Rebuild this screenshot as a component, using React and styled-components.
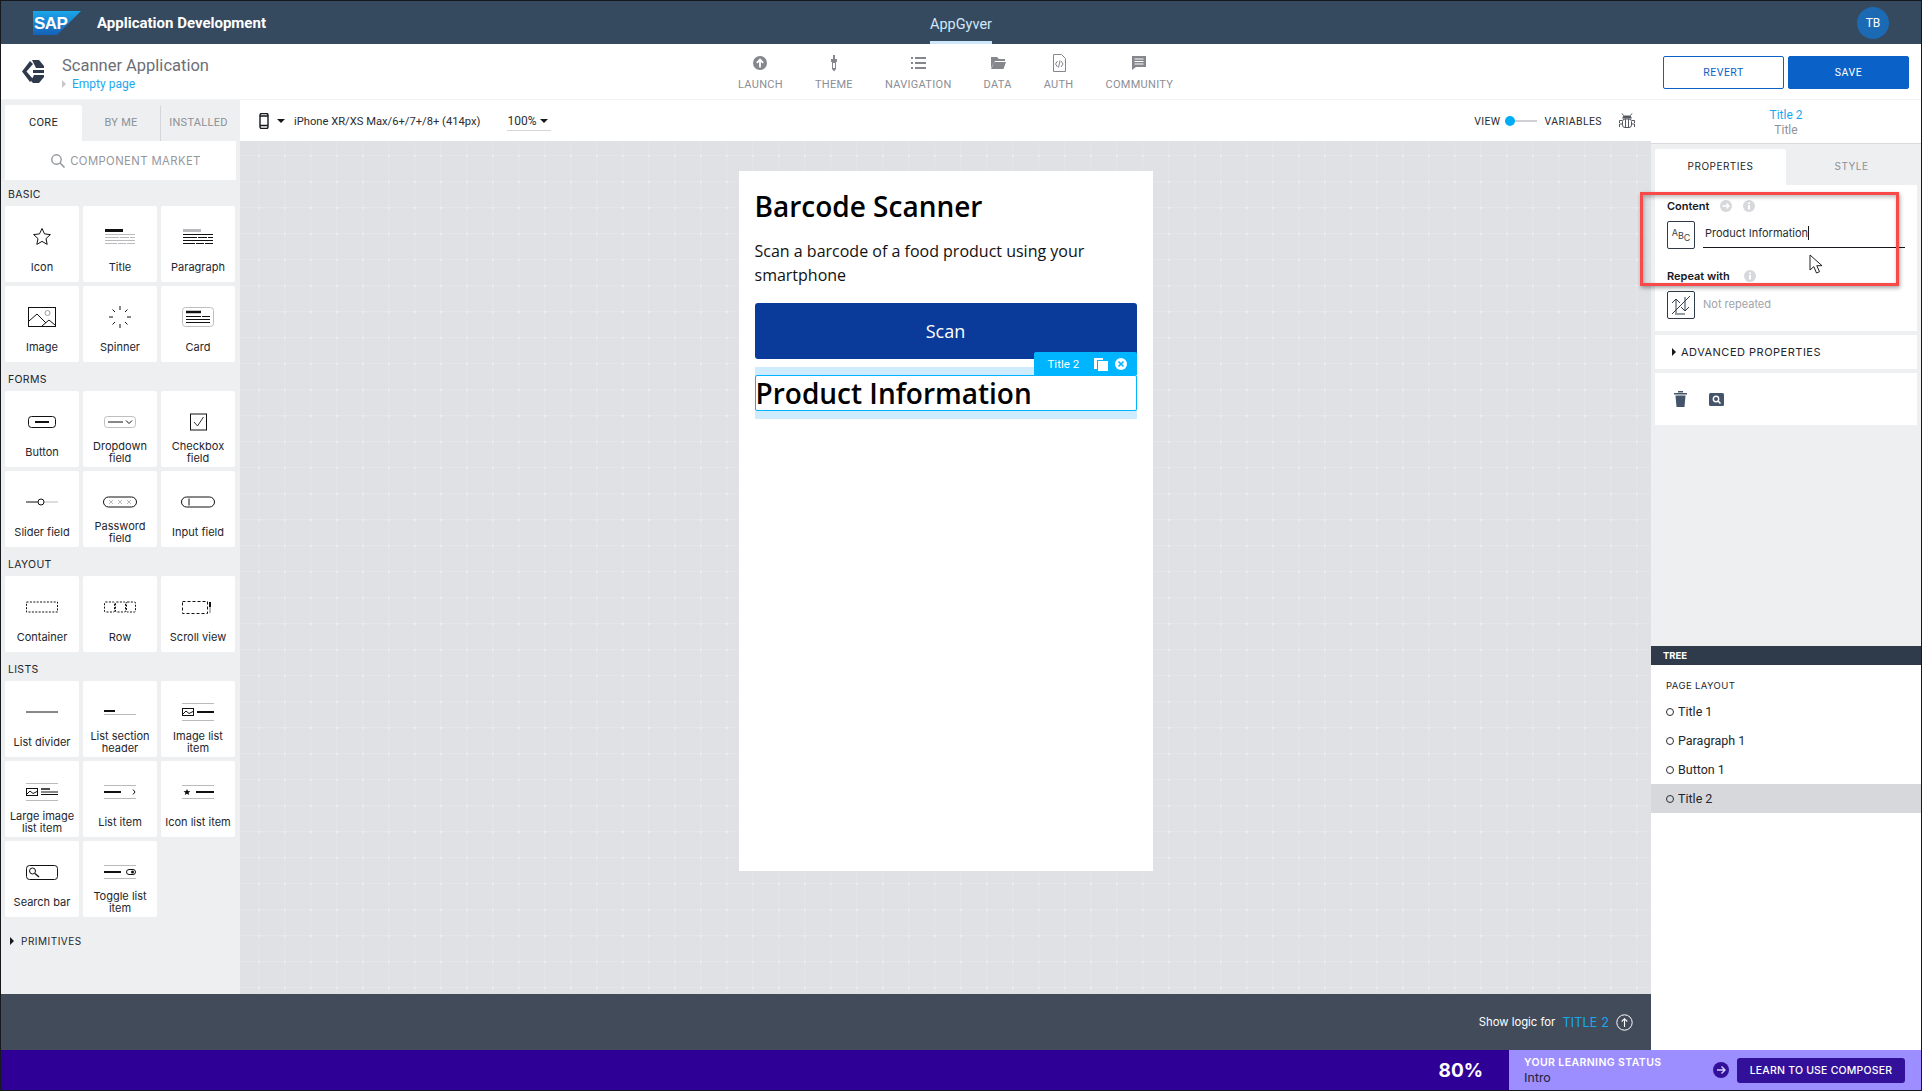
import React from "react";
import styled, { createGlobalStyle } from "styled-components";

const GlobalStyle = createGlobalStyle`
  html, body { margin: 0; padding: 0; background: #fff; }
  * { box-sizing: border-box; }
  body { font-family: Inter, "Liberation Sans", sans-serif; color: #16191f; }
`;

const Frame = styled.div`
  position: relative;
  width: 1922px;
  height: 1091px;
  border: 1px solid #15181c;
  display: flex;
  flex-direction: column;
  overflow: hidden;
`;

/* top bar */
const Header = styled.header`
  height: 43px;
  flex: none;
  background: #364a5f;
  display: grid;
  grid-template-columns: 1fr auto 1fr;
  align-items: center;
  padding: 0 32px;
`;
const Brand = styled.div`
  display: flex;
  align-items: center;
  gap: 16px;
`;
const BrandName = styled.span`
  font-family: Roboto, sans-serif;
  font-weight: 700;
  font-size: 15px;
  color: #fff;
`;
const AppTab = styled.div`
  font-family: Roboto, sans-serif;
  font-size: 14.5px;
  color: #cfe6fb;
  height: 39px;
  width: 62px;
  margin-top: 4px;
  padding-top: 2px;
  display: flex;
  align-items: center;
  justify-content: center;
  border-bottom: 3px solid #cfe6fb;
`;
const Avatar = styled.div`
  justify-self: end;
  width: 32px;
  height: 32px;
  border-radius: 50%;
  background: #1c6ab3;
  color: #fff;
  font-family: Roboto, sans-serif;
  font-size: 12px;
  display: flex;
  align-items: center;
  justify-content: center;
`;

/* second bar */
const Toolbar = styled.div`
  height: 56px;
  flex: none;
  background: #fff;
  border-bottom: 1px solid #f1f2f3;
  display: flex;
  align-items: center;
`;
const Project = styled.div`
  width: 737px;
  flex: none;
  display: flex;
  align-items: center;
  padding-left: 20px;
  gap: 17px;
`;
const ProjectText = styled.div`
  display: flex;
  flex-direction: column;
  padding-top: 3px;
`;
const ProjectName = styled.div`
  font-family: Roboto, sans-serif;
  font-size: 16.5px;
  line-height: 20px;
  color: #6c6f77;
`;
const PageLink = styled.div`
  display: flex;
  align-items: center;
  gap: 6px;
  font-family: Roboto, sans-serif;
  font-size: 12px;
  line-height: 14px;
  margin-top: 1px;
  color: #1ba8f0;
  &::before {
    content: "";
    border-left: 4px solid #c6c8cc;
    border-top: 4px solid transparent;
    border-bottom: 4px solid transparent;
  }
`;
const Nav = styled.nav`
  display: flex;
  gap: 32px;
  padding-top: 2px;
`;
const NavItem = styled.div`
  display: flex;
  flex-direction: column;
  align-items: center;
  gap: 6px;
  font-family: Roboto, sans-serif;
  font-size: 11px;
  letter-spacing: 0.3px;
  color: #8b8e95;
  svg { display: block; }
`;
const Actions = styled.div`
  margin-left: auto;
  margin-top: 1px;
  display: flex;
  gap: 4px;
  padding-right: 12px;
`;
const ActionButton = styled.button`
  width: 121px;
  height: 33px;
  border-radius: 2px;
  border: 1.5px solid #0a62c9;
  background: ${(p) => (p.$primary ? "#0a62c9" : "#fff")};
  color: ${(p) => (p.$primary ? "#fff" : "#0a62c9")};
  font-family: Roboto, sans-serif;
  font-size: 10.5px;
  font-weight: 400;
  letter-spacing: 0.5px;
`;

const Body = styled.div`
  flex: 1;
  min-height: 0;
  display: flex;
`;
const MainColumn = styled.div`
  flex: 1;
  min-width: 0;
  display: flex;
  flex-direction: column;
`;
const WorkArea = styled.div`
  flex: 1;
  min-height: 0;
  display: flex;
`;

/* component palette */
const Palette = styled.aside`
  width: 239px;
  flex: none;
  background: #eeeff1;
  padding: 5px 4px 0 4px;
`;
const PaletteTabs = styled.div`
  display: grid;
  grid-template-columns: 77px 78px 76px;
  height: 36px;
`;
const PaletteTab = styled.div`
  display: flex;
  align-items: center;
  justify-content: center;
  padding-bottom: 2px;
  font-family: Roboto, sans-serif;
  font-size: 11px;
  letter-spacing: 0.3px;
  color: ${(p) => (p.$active ? "#1c1f25" : "#8c8f96")};
  background: ${(p) => (p.$active ? "#fff" : "transparent")};
  border-left: ${(p) => (p.$divider ? "1px solid #d5d6da" : "0")};
  border-radius: 2px 2px 0 0;
`;
const Market = styled.div`
  height: 39px;
  background: #fff;
  display: flex;
  align-items: center;
  justify-content: center;
  gap: 4px;
  padding-left: 10px;
  font-size: 11.3px;
  letter-spacing: 0.4px;
  color: #94979d;
`;
const SectionLabel = styled.div`
  height: ${(p) => (p.$first ? "26px" : "29px")};
  padding-left: 3px;
  padding-top: ${(p) => (p.$first ? "9px" : "12px")};
  font-size: 10.5px;
  line-height: 12px;
  letter-spacing: 0.3px;
  color: #23262d;
`;
const TileGrid = styled.div`
  display: grid;
  grid-template-columns: repeat(3, 74px);
  grid-auto-rows: 76px;
  gap: 4px;
`;
const Tile = styled.div`
  background: #fff;
  border-radius: 2px;
  padding-top: 13px;
  display: flex;
  flex-direction: column;
  align-items: center;
  svg { display: block; }
`;
const TileLabel = styled.div`
  height: 28px;
  width: 100%;
  margin-top: -2px;
  padding: 0 3px;
  display: flex;
  align-items: center;
  justify-content: center;
  text-align: center;
  font-size: 11px;
  line-height: 12px;
  color: #23262d;
`;
const Disclosure = styled.div`
  display: flex;
  align-items: center;
  gap: ${(p) => p.$gap || 6}px;
  font-size: ${(p) => p.$size || 10}px;
  letter-spacing: 0.5px;
  color: #23262d;
  &::before {
    content: "";
    border-left: 4px solid #15181c;
    border-top: 4px solid transparent;
    border-bottom: 4px solid transparent;
  }
`;
const Primitives = styled(Disclosure)`
  height: 16px;
  margin-top: 16px;
  padding-left: 5px;
`;

/* centre */
const Center = styled.div`
  flex: 1;
  min-width: 0;
  display: flex;
  flex-direction: column;
`;
const DeviceBar = styled.div`
  height: 41px;
  flex: none;
  background: #fff;
  display: flex;
  align-items: center;
  padding: 1px 15px 0 19px;
  font-family: Roboto, sans-serif;
  font-size: 11.2px;
  color: #2a2d33;
`;
const Caret = styled.span`
  display: inline-block;
  border-top: 4px solid #15181c;
  border-left: 4px solid transparent;
  border-right: 4px solid transparent;
  margin: ${(p) => p.$margin || "0"};
`;
const Zoom = styled.div`
  margin-left: 27px;
  width: 44px;
  height: 19px;
  border-bottom: 1px solid #d5d6da;
  display: flex;
  align-items: center;
  gap: 4px;
  font-size: 12px;
`;
const ViewSwitch = styled.div`
  margin-left: auto;
  display: flex;
  align-items: center;
  font-size: 10.5px;
  letter-spacing: 0.4px;
`;
const SwitchTrack = styled.div`
  position: relative;
  width: 32px;
  height: 2px;
  background: #cfd0d4;
  margin: 0 8px 0 4px;
  &::before {
    content: "";
    position: absolute;
    left: 0;
    top: -4px;
    width: 10px;
    height: 10px;
    border-radius: 50%;
    background: #00adf5;
  }
`;
const BugWrap = styled.div`
  margin-left: 16px;
  display: flex;
`;
const Canvas = styled.div`
  flex: 1;
  min-height: 0;
  background-color: #e0e1e5;
  background-image:
    radial-gradient(circle at 0.5px 0.5px, rgba(255, 255, 255, 0.35) 1.5px, transparent 2px),
    linear-gradient(to right, rgba(255, 255, 255, 0.12) 1px, transparent 1px),
    linear-gradient(to bottom, rgba(255, 255, 255, 0.12) 1px, transparent 1px);
  background-size: 26px 26px;
  background-position: 18px 14px;
  display: flex;
  justify-content: center;
  padding-top: 30px;
`;
const Phone = styled.div`
  width: 414px;
  height: 700px;
  background: #fff;
  padding: 16px;
  font-family: "Open Sans", sans-serif;
  color: #000;
`;
const PhoneTitle = styled.div`
  font-size: 28px;
  font-weight: 600;
  line-height: 38px;
  color: #000;
`;
const PhoneText = styled.div`
  margin-top: 14px;
  font-size: 16px;
  line-height: 24px;
  color: #111;
`;
const ScanButton = styled.div`
  margin-top: 16px;
  height: 56px;
  background: #0a3b9a;
  border-radius: 3px;
  color: #fff;
  font-size: 18px;
  display: flex;
  align-items: center;
  justify-content: center;
`;
const SelectedBand = styled.div`
  position: relative;
  margin-top: 8px;
  padding: 8px 0;
  background: #cfecff;
`;
const SelectedTitle = styled.div`
  height: 36px;
  background: #fff;
  border: 1px solid #00b5ff;
  border-radius: 2px;
  display: flex;
  align-items: center;
  font-size: 28px;
  font-weight: 600;
  line-height: 34px;
`;
const SelectionTag = styled.div`
  position: absolute;
  right: 0;
  top: -15px;
  width: 103px;
  height: 23px;
  background: #00b5ff;
  border-radius: 2px 2px 0 0;
  color: #fff;
  font-size: 11.5px;
  display: flex;
  align-items: center;
  gap: 15px;
  padding-left: 14px;
  font-family: Roboto, sans-serif;
  svg { display: block; }
`;

const LogicBar = styled.div`
  height: 56px;
  flex: none;
  background: #424b5a;
  display: flex;
  align-items: center;
  justify-content: flex-end;
  padding-right: 18px;
  font-size: 11.3px;
  color: #fff;
`;
const LogicTarget = styled.span`
  color: #19a9ef;
  font-size: 12.5px;
  margin: 0 7px 0 7px;
  letter-spacing: 0.2px;
`;

/* right panel */
const Inspector = styled.aside`
  width: 270px;
  flex: none;
  display: flex;
  flex-direction: column;
  background: #eeeff1;
`;
const InspectorHead = styled.div`
  height: 44px;
  flex: none;
  background: #fff;
  border-bottom: 1px solid #d9dadd;
  text-align: center;
  padding-top: 8px;
  font-family: Roboto, sans-serif;
  font-size: 12px;
  line-height: 15px;
`;
const HeadTitle = styled.div`
  color: #1ba8f0;
`;
const HeadType = styled.div`
  color: #8f9298;
`;
const InspectorBody = styled.div`
  flex: 1;
  min-height: 0;
  padding: 5px 4px 0 4px;
`;
const InspectorTabs = styled.div`
  display: grid;
  grid-template-columns: 131px 131px;
  height: 36px;
`;
const InspectorTab = styled(PaletteTab)`
  font-family: Inter, sans-serif;
  font-size: 10px;
  letter-spacing: 0.5px;
`;
const Card = styled.div`
  background: #fff;
  margin-bottom: 4px;
  height: ${(p) => p.$height}px;
`;
const PropsCard = styled(Card)`
  padding: 13px 12px 0 12px;
`;
const FieldLabel = styled.div`
  display: flex;
  align-items: center;
  gap: ${(p) => p.$gap}px;
  height: 16px;
  margin-top: ${(p) => p.$top || 0}px;
  font-size: 11px;
  font-weight: 600;
  color: #15181c;
`;
const FieldRow = styled.div`
  display: flex;
  gap: 8px;
  margin-top: 7px;
`;
const TypeBox = styled.div`
  width: 28px;
  height: 28px;
  flex: none;
  border: 1px solid #2f3a4b;
  border-radius: 2px;
  display: flex;
  align-items: center;
  justify-content: center;
  color: #3a3f49;
  svg { display: block; }
`;
const AbcLetter = styled.span`
  position: relative;
  top: ${(p) => p.$shift}px;
  font-size: 9px;
`;
const FieldInput = styled.div`
  flex: 1;
  height: 27px;
  border-bottom: 1px solid #15181c;
  padding: 0 0 2px 2px;
  display: flex;
  align-items: center;
  font-size: 11px;
  color: #2a2d33;
  &::after {
    content: "";
    width: 1px;
    height: 14px;
    background: #15181c;
  }
`;
const NotRepeated = styled.div`
  display: flex;
  align-items: center;
  padding-bottom: 2px;
  font-size: 11px;
  color: #a0a3a9;
`;
const AdvancedCard = styled(Card)`
  display: flex;
  align-items: center;
  padding-left: 17px;
`;
const ToolsCard = styled(Card)`
  display: flex;
  align-items: center;
  padding: 0 0 0 19px;
  gap: 22px;
  svg { display: block; }
`;
const Tree = styled.div`
  height: 404px;
  flex: none;
  background: #fff;
`;
const TreeHead = styled.div`
  height: 19px;
  background: #2f3a4b;
  color: #fff;
  font-size: 9.5px;
  font-weight: 700;
  display: flex;
  align-items: center;
  padding-left: 12px;
`;
const TreeLabel = styled.div`
  padding: 15px 0 0 15px;
  height: 32px;
  font-size: 9.5px;
  line-height: 12px;
  letter-spacing: 0.4px;
  color: #23262d;
`;
const TreeItem = styled.div`
  height: 29px;
  display: flex;
  align-items: center;
  gap: 4px;
  padding-left: 15px;
  font-family: Roboto, sans-serif;
  font-size: 12.5px;
  color: #23262d;
  background: ${(p) => (p.$active ? "#d7d8dc" : "transparent")};
  &::before {
    content: "";
    width: 6px;
    height: 6px;
    border-radius: 50%;
    border: 1px solid #2a2d33;
  }
`;

/* learning bar */
const Footer = styled.footer`
  height: 40px;
  flex: none;
  display: flex;
`;
const Score = styled.div`
  width: 1508px;
  background: #2f0096;
  color: #fff;
  font-weight: 700;
  font-size: 19px;
  display: flex;
  align-items: center;
  justify-content: flex-end;
  padding-right: 26px;
`;
const Learning = styled.div`
  flex: 1;
  background: #9d8eff;
  display: flex;
  align-items: center;
  padding: 0 16px 0 15px;
`;
const LearningText = styled.div`
  display: flex;
  flex-direction: column;
  gap: 1px;
  padding-top: 1px;
`;
const LearningTitle = styled.div`
  font-size: 10.5px;
  line-height: 13px;
  font-weight: 600;
  letter-spacing: 0.4px;
  color: #fff;
`;
const LearningLevel = styled.div`
  font-family: Roboto, sans-serif;
  font-size: 13px;
  line-height: 15px;
  color: #26233f;
`;
const LearnButton = styled.div`
  margin-left: 8px;
  width: 168px;
  height: 25px;
  background: #33109a;
  border-radius: 3px;
  color: #fff;
  font-size: 10.5px;
  font-weight: 500;
  letter-spacing: 0.2px;
  display: flex;
  align-items: center;
  justify-content: center;
`;
const ArrowDot = styled.div`
  margin-left: auto;
  display: flex;
`;

/* overlays that belong to the screenshot annotation */
const Callout = styled.div`
  position: absolute;
  left: 1639px;
  top: 191px;
  width: 259px;
  height: 94px;
  border: 3px solid #f94a4a;
  box-shadow: 1px 2px 4px rgba(0, 0, 0, 0.35), inset 1px 2px 4px rgba(0, 0, 0, 0.28);
  pointer-events: none;
`;
const Pointer = styled.svg`
  position: absolute;
  left: 1808px;
  top: 253px;
`;

const line = (x1, y1, x2, y2, color = "#111", w = 1, extra = {}) => (
  <line x1={x1} y1={y1} x2={x2} y2={y2} stroke={color} strokeWidth={w} {...extra} />
);
const G = "#b9babd";
const dash = { strokeDasharray: "2 1.4" };

const icons = {
  star: <path d="M24 9.5l2.5 5.4 5.9.7-4.4 4 1.2 5.8-5.2-3-5.2 3 1.2-5.8-4.4-4 5.9-.7z" fill="none" stroke="#111" />,
  title: (
    <>
      {line(9, 11.5, 27, 11.5, "#111", 3)}
      {line(9, 15.5, 39, 15.5, G)}
      {line(9, 18.5, 39, 18.5, G, 1, { strokeDasharray: "14 1 9 1 5" })}
      {line(9, 21.5, 39, 21.5, G)}
      {line(9, 24.5, 39, 24.5, G, 1, { strokeDasharray: "12 1 8 1 8" })}
    </>
  ),
  paragraph: (
    <>
      {line(9, 11.5, 27, 11.5, G, 3)}
      {line(9, 15.5, 39, 15.5)}
      {line(9, 18.5, 39, 18.5, "#111", 1, { strokeDasharray: "14 1 9 1 5" })}
      {line(9, 21.5, 39, 21.5)}
      {line(9, 24.5, 39, 24.5, "#111", 1, { strokeDasharray: "12 1 8 1 8" })}
    </>
  ),
  image: (
    <>
      <rect x="10.5" y="8.5" width="27" height="19" fill="none" stroke="#111" />
      <path d="M11 22l8-7 9 9M24 27l7-6 6 5" fill="none" stroke="#111" />
      <circle cx="29.5" cy="14" r="2.5" fill="none" stroke="#999" />
    </>
  ),
  spinner: (
    <>
      {line(24, 7, 24, 11)}
      {line(24, 25, 24, 29)}
      {line(13, 18, 17, 18)}
      {line(31, 18, 35, 18)}
      {line(16.5, 10.5, 19, 13)}
      {line(29, 23, 31.5, 25.5)}
      {line(16.5, 25.5, 19, 23)}
      {line(29, 13, 31.5, 10.5)}
    </>
  ),
  card: (
    <>
      <rect x="8.5" y="8.5" width="31" height="19" rx="3" fill="none" stroke="#bdbec1" />
      {line(12, 13, 27, 13, "#111", 2.5)}
      {line(12, 17.5, 36, 17.5, "#111", 1, { strokeDasharray: "15 1 8" })}
      {line(12, 20.5, 36, 20.5)}
      {line(12, 23.5, 36, 23.5)}
    </>
  ),
  button: (
    <>
      <rect x="10.5" y="12.5" width="27" height="11" rx="3" fill="none" stroke="#111" />
      {line(17, 18, 31, 18, "#111", 2)}
    </>
  ),
  dropdown: (
    <>
      <rect x="8.5" y="12.5" width="31" height="11" rx="3" fill="none" stroke="#bdbec1" />
      {line(12, 18, 27, 18)}
      <path d="M30 16.5l3 3 3-3" fill="none" stroke="#111" />
    </>
  ),
  checkbox: (
    <>
      <rect x="16.5" y="10" width="16" height="16" fill="none" stroke="#111" />
      <path d="M20 18l3.5 4 6-9" fill="none" stroke="#333" />
    </>
  ),
  slider: (
    <>
      {line(8, 18, 20, 18)}
      {line(26, 18, 40, 18, G)}
      <circle cx="23" cy="18" r="3" fill="none" stroke="#111" />
    </>
  ),
  password: (
    <>
      <rect x="7.5" y="13" width="33" height="10" rx="5" fill="none" stroke="#111" />
      <path d="M13 16l4 4m0-4l-4 4M22 16l4 4m0-4l-4 4M31 16l4 4m0-4l-4 4" stroke={G} fill="none" />
    </>
  ),
  input: (
    <>
      <rect x="7.5" y="13" width="33" height="10" rx="5" fill="none" stroke="#111" />
      {line(15, 14.5, 15, 21.5)}
    </>
  ),
  container: <rect x="8.5" y="13" width="31" height="10" fill="none" stroke="#111" strokeDasharray="2 1.4" />,
  row: (
    <>
      <rect x="8.5" y="13" width="10" height="10" rx="1" fill="none" stroke="#111" {...dash} />
      <rect x="19.5" y="13" width="10" height="10" rx="1" fill="none" stroke="#111" {...dash} />
      <rect x="30.5" y="13" width="9" height="10" rx="1" fill="none" stroke="#111" {...dash} />
    </>
  ),
  scroll: (
    <>
      <rect x="8.5" y="12.5" width="25" height="12" fill="none" stroke="#111" strokeDasharray="3 2" />
      {line(36, 13, 36, 18, "#111", 2)}
      {line(36, 18, 36, 24, G, 2)}
    </>
  ),
  divider: line(8, 18, 40, 18),
  sectionHeader: (
    <>
      {line(8, 17, 19, 17, "#111", 2)}
      {line(8, 20.5, 40, 20.5, G)}
    </>
  ),
  imageItem: (
    <>
      {line(8, 9.5, 40, 9.5, G)}
      {line(8, 26.5, 40, 26.5, G)}
      <rect x="8.5" y="14.5" width="11" height="7" fill="none" stroke="#111" />
      <path d="M9 20l3-3 3 2.5 4-2" fill="none" stroke="#111" />
      {line(23, 18, 40, 18, "#111", 2)}
    </>
  ),
  largeImageItem: (
    <>
      {line(8, 9.5, 40, 9.5, G)}
      {line(8, 26.5, 40, 26.5, G)}
      <rect x="8.5" y="14.5" width="11" height="7" fill="none" stroke="#111" />
      <path d="M9 20l3-3 3 2.5 4-2" fill="none" stroke="#111" />
      {line(23, 15, 32, 15, "#111", 1.5)}
      {line(23, 18, 40, 18)}
      {line(23, 20.5, 40, 20.5)}
    </>
  ),
  listItem: (
    <>
      {line(8, 11.5, 40, 11.5, G)}
      {line(8, 24.5, 40, 24.5, G)}
      {line(8, 18, 25, 18, "#111", 2)}
      <path d="M37 15.5l2 2.5-2 2.5" fill="none" stroke="#111" />
    </>
  ),
  iconItem: (
    <>
      {line(8, 11.5, 40, 11.5, G)}
      {line(8, 24.5, 40, 24.5, G)}
      <path d="M13 15l1 2 2.4.2-1.8 1.5.6 2.3-2.2-1.2-2.2 1.2.6-2.3-1.8-1.5 2.4-.2z" fill="#111" />
      {line(22, 18, 40, 18, "#111", 2)}
    </>
  ),
  search: (
    <>
      <rect x="8.5" y="11.5" width="31" height="14" rx="3" fill="none" stroke="#111" />
      <circle cx="14.5" cy="17" r="3" fill="none" stroke="#111" />
      {line(17, 19.5, 21, 23, "#111", 1.3)}
    </>
  ),
  toggle: (
    <>
      {line(8, 11.5, 40, 11.5, G)}
      {line(8, 24.5, 40, 24.5, G)}
      {line(8, 18, 25, 18, "#111", 2)}
      <rect x="30.5" y="15.5" width="9" height="5" rx="2.5" fill="none" stroke="#111" />
      <circle cx="36.5" cy="18" r="1.5" fill="#111" />
    </>
  ),
};

const sections = [
  {
    name: "BASIC",
    items: [
      ["Icon", "star"],
      ["Title", "title"],
      ["Paragraph", "paragraph"],
      ["Image", "image"],
      ["Spinner", "spinner"],
      ["Card", "card"],
    ],
  },
  {
    name: "FORMS",
    items: [
      ["Button", "button"],
      ["Dropdown field", "dropdown"],
      ["Checkbox field", "checkbox"],
      ["Slider field", "slider"],
      ["Password field", "password"],
      ["Input field", "input"],
    ],
  },
  {
    name: "LAYOUT",
    items: [
      ["Container", "container"],
      ["Row", "row"],
      ["Scroll view", "scroll"],
    ],
  },
  {
    name: "LISTS",
    items: [
      ["List divider", "divider"],
      ["List section header", "sectionHeader"],
      ["Image list item", "imageItem"],
      ["Large image list item", "largeImageItem"],
      ["List item", "listItem"],
      ["Icon list item", "iconItem"],
      ["Search bar", "search"],
      ["Toggle list item", "toggle"],
    ],
  },
];

const navItems = [
  {
    label: "LAUNCH",
    icon: (
      <>
        <circle cx="9" cy="9" r="7" fill="#85878d" />
        <path d="M9 13.5V6M5.8 8.8L9 5.5l3.2 3.3" fill="none" stroke="#fff" strokeWidth="1.8" />
      </>
    ),
  },
  {
    label: "THEME",
    icon: (
      <>
        <path d="M8 1h2v4h2v3h-1v7l-2 2.5L7 15V8H6V5h2z" fill="#85878d" />
        <path d="M8 9h2v5H8z" fill="#fff" />
      </>
    ),
  },
  {
    label: "NAVIGATION",
    icon: (
      <path
        d="M2 3h2v2H2zM6 3h11v2H6zM2 8h2v2H2zM6 8h11v2H6zM2 13h2v2H2zM6 13h11v2H6z"
        fill="#85878d"
      />
    ),
  },
  {
    label: "DATA",
    icon: <path d="M2 3h6l2 2h6v2H6l-4 7zM5.5 8H17l-2.5 7H2z" fill="#85878d" />,
  },
  {
    label: "AUTH",
    icon: (
      <>
        <path d="M3.5 .5h8l4 4v13h-12z" fill="none" stroke="#85878d" />
        <path d="M7.5 7L5.5 10l2 3M11 7l2 3-2 3M10 6.5l-1.5 7" fill="none" stroke="#85878d" />
      </>
    ),
  },
  {
    label: "COMMUNITY",
    icon: (
      <>
        <path d="M2 2h14v11H6l-4 3z" fill="#85878d" />
        <path d="M4.5 5h9M4.5 7.5h9M4.5 10h9" stroke="#fff" />
      </>
    ),
  },
];

const SapLogo = () => (
  <svg width="48" height="24" viewBox="0 0 48 24">
    <defs>
      <linearGradient id="sapBlue" x1="0" y1="0" x2="0" y2="1">
        <stop offset="0" stopColor="#1aa6ea" />
        <stop offset="1" stopColor="#1561b8" />
      </linearGradient>
    </defs>
    <path d="M0 0h48L24 24H0z" fill="url(#sapBlue)" />
    <text x="1" y="17.5" fontFamily="Liberation Sans, sans-serif" fontWeight="700" fontSize="17" fill="#fff" letterSpacing="-0.6">
      SAP
    </text>
  </svg>
);

const ProjectLogo = () => (
  <svg width="24" height="25" viewBox="0 0 24 25">
    <g fill="#2f3a4b">
      <path d="M9 2L1 12.5 9 23l3-3-6.5-7.5L12 5z" />
      <path d="M11 1h7l5 6v2H15z" />
      <path d="M12 11h11v3H12z" />
      <path d="M13 16h10v2l-5 6h-6l-2-2z" />
    </g>
  </svg>
);

const InfoDot = () => (
  <svg width="12" height="12" viewBox="0 0 12 12">
    <circle cx="6" cy="6" r="6" fill="#d7d8db" />
    <path d="M5 5h2v4.5H5zM5 2.5h2V4H5z" fill="#fff" />
  </svg>
);

const ArrowHint = () => (
  <svg width="12" height="12" viewBox="0 0 12 12">
    <circle cx="6" cy="6" r="6" fill="#d7d8db" />
    <path d="M2.5 6h6.5M6.5 3.5L9 6 6.5 8.5" fill="none" stroke="#fff" strokeWidth="1.4" />
  </svg>
);

export default function App() {
  return (
    <>
      <GlobalStyle />
      <Frame>
        <Header>
          <Brand>
            <SapLogo />
            <BrandName>Application Development</BrandName>
          </Brand>
          <AppTab>AppGyver</AppTab>
          <Avatar>TB</Avatar>
        </Header>

        <Toolbar>
          <Project>
            <ProjectLogo />
            <ProjectText>
              <ProjectName>Scanner Application</ProjectName>
              <PageLink>Empty page</PageLink>
            </ProjectText>
          </Project>
          <Nav>
            {navItems.map((n) => (
              <NavItem key={n.label}>
                <svg width="18" height="18" viewBox="0 0 18 18">{n.icon}</svg>
                {n.label}
              </NavItem>
            ))}
          </Nav>
          <Actions>
            <ActionButton>REVERT</ActionButton>
            <ActionButton $primary>SAVE</ActionButton>
          </Actions>
        </Toolbar>

        <Body>
          <MainColumn>
            <WorkArea>
              <Palette>
                <PaletteTabs>
                  <PaletteTab $active>CORE</PaletteTab>
                  <PaletteTab>BY ME</PaletteTab>
                  <PaletteTab $divider>INSTALLED</PaletteTab>
                </PaletteTabs>
                <Market>
                  <svg width="16" height="16" viewBox="0 0 16 16">
                    <circle cx="6.5" cy="6.5" r="4.7" fill="none" stroke="#94979d" strokeWidth="1.4" />
                    <path d="M10 10l4.5 4.5" stroke="#94979d" strokeWidth="1.6" />
                  </svg>
                  COMPONENT MARKET
                </Market>
                {sections.map((s, i) => (
                  <div key={s.name}>
                    <SectionLabel $first={i === 0}>{s.name}</SectionLabel>
                    <TileGrid>
                      {s.items.map(([label, icon]) => (
                        <Tile key={label}>
                          <svg width="48" height="36" viewBox="0 0 48 36">{icons[icon]}</svg>
                          <TileLabel>{label}</TileLabel>
                        </Tile>
                      ))}
                    </TileGrid>
                  </div>
                ))}
                <Primitives $gap={7}>PRIMITIVES</Primitives>
              </Palette>

              <Center>
                <DeviceBar>
                  <svg width="10" height="16" viewBox="0 0 10 16">
                    <rect x="1" y=".5" width="8" height="15" rx="1.5" fill="#fff" stroke="#15181c" strokeWidth="1.4" />
                    <path d="M1 3h8M1 12.5h8" stroke="#15181c" strokeWidth="1.4" />
                  </svg>
                  <Caret $margin="0 9px 0 8px" />
                  iPhone XR/XS Max/6+/7+/8+ (414px)
                  <Zoom>
                    100%
                    <Caret />
                  </Zoom>
                  <ViewSwitch>
                    VIEW
                    <SwitchTrack />
                    VARIABLES
                    <BugWrap>
                      <svg width="18" height="18" viewBox="0 0 18 18">
                        <path d="M5.5 3.5h7l1.5 3H4z" fill="#55585f" />
                        <rect x="4.5" y="7" width="9" height="8.5" rx="2.5" fill="none" stroke="#55585f" />
                        <path
                          d="M7.5 7v8.5M10.5 7v8.5M5.5 3.5L4 1.5M12.5 3.5L14 1.5M4 8.5H1.5V11M14 8.5h2.5V11M4 12H1.5v3M14 12h2.5v3"
                          fill="none"
                          stroke="#55585f"
                        />
                      </svg>
                    </BugWrap>
                  </ViewSwitch>
                </DeviceBar>
                <Canvas>
                  <Phone>
                    <PhoneTitle>Barcode Scanner</PhoneTitle>
                    <PhoneText>Scan a barcode of a food product using your smartphone</PhoneText>
                    <ScanButton>Scan</ScanButton>
                    <SelectedBand>
                      <SelectionTag>
                        Title 2
                        <svg width="34" height="14" viewBox="0 0 34 14">
                          <path d="M0 1h9v2H3v9H0z" fill="#fff" />
                          <path d="M4 4h10v10H4z" fill="#fff" />
                          <circle cx="27" cy="7" r="6" fill="#fff" />
                          <path d="M24.5 4.5l5 5m0-5l-5 5" stroke="#00b5ff" strokeWidth="1.6" />
                        </svg>
                      </SelectionTag>
                      <SelectedTitle>Product Information</SelectedTitle>
                    </SelectedBand>
                  </Phone>
                </Canvas>
              </Center>
            </WorkArea>
            <LogicBar>
              Show logic for
              <LogicTarget>TITLE 2</LogicTarget>
              <svg width="17" height="17" viewBox="0 0 17 17">
                <circle cx="8.5" cy="8.5" r="7.7" fill="none" stroke="#fff" />
                <path d="M8.5 13V5M5.7 7.5l2.8-2.8 2.8 2.8" fill="none" stroke="#fff" strokeWidth="1.1" />
              </svg>
            </LogicBar>
          </MainColumn>

          <Inspector>
            <InspectorHead>
              <HeadTitle>Title 2</HeadTitle>
              <HeadType>Title</HeadType>
            </InspectorHead>
            <InspectorBody>
              <InspectorTabs>
                <InspectorTab $active>PROPERTIES</InspectorTab>
                <InspectorTab>STYLE</InspectorTab>
              </InspectorTabs>
              <PropsCard $height={146}>
                <FieldLabel $gap={11}>
                  Content
                  <ArrowHint />
                  <InfoDot />
                </FieldLabel>
                <FieldRow>
                  <TypeBox>
                    <AbcLetter $shift={-3}>A</AbcLetter>
                    <AbcLetter $shift={0}>B</AbcLetter>
                    <AbcLetter $shift={2}>C</AbcLetter>
                  </TypeBox>
                  <FieldInput>Product Information</FieldInput>
                </FieldRow>
                <FieldLabel $top={19} $gap={14}>
                  Repeat with
                  <InfoDot />
                </FieldLabel>
                <FieldRow>
                  <TypeBox>
                    <svg width="24" height="24" viewBox="0 0 24 24">
                      <path d="M7 20V6M3 10l4-4 4 4M16 4v14M12 14l4 4 4-4M3 21L21 3M6 21h10" fill="none" stroke="#2f3a4b" />
                    </svg>
                  </TypeBox>
                  <NotRepeated>Not repeated</NotRepeated>
                </FieldRow>
              </PropsCard>
              <AdvancedCard $height={34}>
                <Disclosure $size={11} $gap={5}>ADVANCED PROPERTIES</Disclosure>
              </AdvancedCard>
              <ToolsCard $height={52}>
                <svg width="13" height="16" viewBox="0 0 13 16">
                  <path d="M0 2h13v1.5H0zM4 0h5v1.5H4zM1.5 4.5h10L10.5 16h-8z" fill="#44546a" />
                </svg>
                <svg width="15" height="13" viewBox="0 0 15 13">
                  <rect width="15" height="13" rx="1.5" fill="#44546a" />
                  <circle cx="7" cy="6" r="2.7" fill="none" stroke="#fff" strokeWidth="1.4" />
                  <path d="M9 8l2.5 2.5" stroke="#fff" strokeWidth="1.5" />
                </svg>
              </ToolsCard>
            </InspectorBody>
            <Tree>
              <TreeHead>TREE</TreeHead>
              <TreeLabel>PAGE LAYOUT</TreeLabel>
              <TreeItem>Title 1</TreeItem>
              <TreeItem>Paragraph 1</TreeItem>
              <TreeItem>Button 1</TreeItem>
              <TreeItem $active>Title 2</TreeItem>
            </Tree>
          </Inspector>
        </Body>

        <Footer>
          <Score>80%</Score>
          <Learning>
            <LearningText>
              <LearningTitle>YOUR LEARNING STATUS</LearningTitle>
              <LearningLevel>Intro</LearningLevel>
            </LearningText>
            <ArrowDot>
              <svg width="16" height="16" viewBox="0 0 16 16">
                <circle cx="8" cy="8" r="8" fill="#33109a" />
                <path d="M4 8h8M8.5 4.5L12 8l-3.5 3.5" fill="none" stroke="#d8d0ff" strokeWidth="1.4" />
              </svg>
            </ArrowDot>
            <LearnButton>LEARN TO USE COMPOSER</LearnButton>
          </Learning>
        </Footer>

        <Callout />
        <Pointer width="15" height="20" viewBox="0 0 15 20">
          <path d="M1 1v15l3.8-3.4L7.5 19l3-1.3-2.7-6H13z" fill="#fff" stroke="#222" />
        </Pointer>
      </Frame>
    </>
  );
}
